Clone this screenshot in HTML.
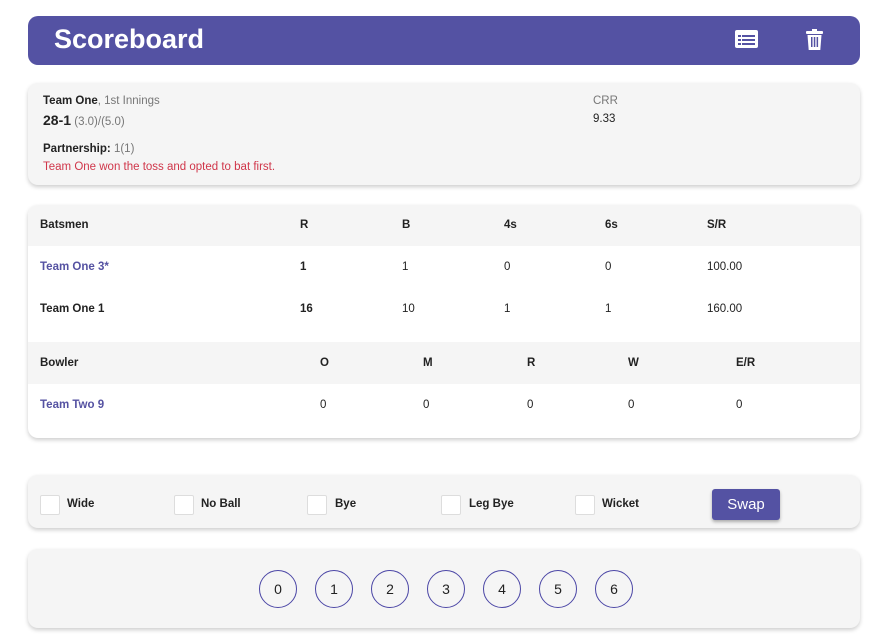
<!DOCTYPE html><html><head><style>
body{margin:0;width:893px;height:639px;background:#fff;font-family:"Liberation Sans",Arial,sans-serif;position:relative;overflow:hidden}
.a{position:absolute}
.card{position:absolute;left:28px;width:832px;background:#f5f5f5;border-radius:10px;box-shadow:0 2px 4px rgba(0,0,0,.2)}
.t{position:absolute;font-size:11.5px;color:#222;white-space:nowrap}
.b{font-weight:bold}
.p{color:#5552a2}
.cb{position:absolute;width:18px;height:18px;background:#fff;border:1px solid #ddd;border-radius:2px;top:20px}
.c{position:absolute;top:21px;width:36px;height:36px;border:1px solid #4c47a6;border-radius:50%;font-size:14px;text-align:center;line-height:36px;color:#222}
</style></head><body>
<div class="a" style="left:28px;top:16px;width:832px;height:49px;background:#5452a3;border-radius:10px"></div>
<div class="a" style="left:54px;top:24px;font-size:27px;font-weight:bold;color:#fff">Scoreboard</div>
<svg class="a" style="left:735px;top:30px" width="23" height="18" viewBox="0 0 23 18"><rect x="0" y="0" width="23" height="18" rx="2" fill="#fff"/><g fill="#5452a3"><rect x="3" y="5" width="3" height="2"/><rect x="7" y="5" width="13" height="2"/><rect x="3" y="9" width="3" height="2"/><rect x="7" y="9" width="13" height="2"/><rect x="3" y="13" width="3" height="2"/><rect x="7" y="13" width="13" height="2"/></g></svg>
<svg class="a" style="left:806px;top:29px" width="17" height="21" viewBox="0 0 17 21"><rect x="0" y="2" width="17" height="3" rx="1" fill="#fff"/><rect x="6" y="0" width="5" height="3" fill="#fff"/><path d="M1.5 6h14l-1.2 15H2.7z" fill="#fff"/><g fill="#5452a3"><rect x="5" y="8" width="1.5" height="10"/><rect x="7.8" y="8" width="1.5" height="10"/><rect x="10.6" y="8" width="1.5" height="10"/></g></svg>

<div class="card" style="top:83px;height:102px">
<div class="t" style="left:15px;top:12px"><span class="b">Team One</span><span style="color:#777">, 1st Innings</span></div>
<div class="t" style="left:15px;top:29px"><span class="b" style="font-size:14px">28-1</span> <span style="color:#777">(3.0)/(5.0)</span></div>
<div class="t" style="left:15px;top:60px"><span class="b">Partnership:</span> <span style="color:#777">1(1)</span></div>
<div class="t" style="left:15px;top:78px;color:#d0364a">Team One won the toss and opted to bat first.</div>
<div class="t" style="left:565px;top:12px;color:#777">CRR</div>
<div class="t" style="left:565px;top:30px">9.33</div>
</div>

<div class="card" style="top:205px;height:233px;background:#fff;overflow:hidden">
<div class="a" style="left:0;top:0;width:832px;height:41px;background:#f5f5f5"></div>
<div class="a" style="left:0;top:137px;width:832px;height:42px;background:#f5f5f5"></div>
<div class="t b" style="left:12px;top:14px">Batsmen</div><div class="t b" style="left:272px;top:14px">R</div><div class="t b" style="left:374px;top:14px">B</div><div class="t b" style="left:476px;top:14px">4s</div><div class="t b" style="left:577px;top:14px">6s</div><div class="t b" style="left:679px;top:14px">S/R</div>
<div class="t b p" style="left:12px;top:56px">Team One 3*</div><div class="t b" style="left:272px;top:56px">1</div><div class="t" style="left:374px;top:56px">1</div><div class="t" style="left:476px;top:56px">0</div><div class="t" style="left:577px;top:56px">0</div><div class="t" style="left:679px;top:56px">100.00</div>
<div class="t b" style="left:12px;top:98px">Team One 1</div><div class="t b" style="left:272px;top:98px">16</div><div class="t" style="left:374px;top:98px">10</div><div class="t" style="left:476px;top:98px">1</div><div class="t" style="left:577px;top:98px">1</div><div class="t" style="left:679px;top:98px">160.00</div>
<div class="t b" style="left:12px;top:152px">Bowler</div><div class="t b" style="left:292px;top:152px">O</div><div class="t b" style="left:395px;top:152px">M</div><div class="t b" style="left:499px;top:152px">R</div><div class="t b" style="left:600px;top:152px">W</div><div class="t b" style="left:708px;top:152px">E/R</div>
<div class="t b p" style="left:12px;top:194px">Team Two 9</div><div class="t" style="left:292px;top:194px">0</div><div class="t" style="left:395px;top:194px">0</div><div class="t" style="left:499px;top:194px">0</div><div class="t" style="left:600px;top:194px">0</div><div class="t" style="left:708px;top:194px">0</div>
</div>

<div class="card" style="top:475px;height:53px">
<div class="cb" style="left:12px"></div><div class="t b" style="left:39px;top:23px">Wide</div>
<div class="cb" style="left:146px"></div><div class="t b" style="left:173px;top:23px">No Ball</div>
<div class="cb" style="left:279px"></div><div class="t b" style="left:307px;top:23px">Bye</div>
<div class="cb" style="left:413px"></div><div class="t b" style="left:441px;top:23px">Leg Bye</div>
<div class="cb" style="left:547px"></div><div class="t b" style="left:574px;top:23px">Wicket</div>
<div class="a" style="left:684px;top:14px;width:68px;height:31px;background:#5452a3;border-radius:3px;box-shadow:0 2px 3px rgba(0,0,0,.3);color:#fff;font-size:15px;text-align:center;line-height:31px">Swap</div>
</div>

<div class="card" style="top:549px;height:79px">
<div class="c" style="left:231px">0</div><div class="c" style="left:287px">1</div><div class="c" style="left:343px">2</div><div class="c" style="left:399px">3</div><div class="c" style="left:455px">4</div><div class="c" style="left:511px">5</div><div class="c" style="left:567px">6</div>
</div>
</body></html>
